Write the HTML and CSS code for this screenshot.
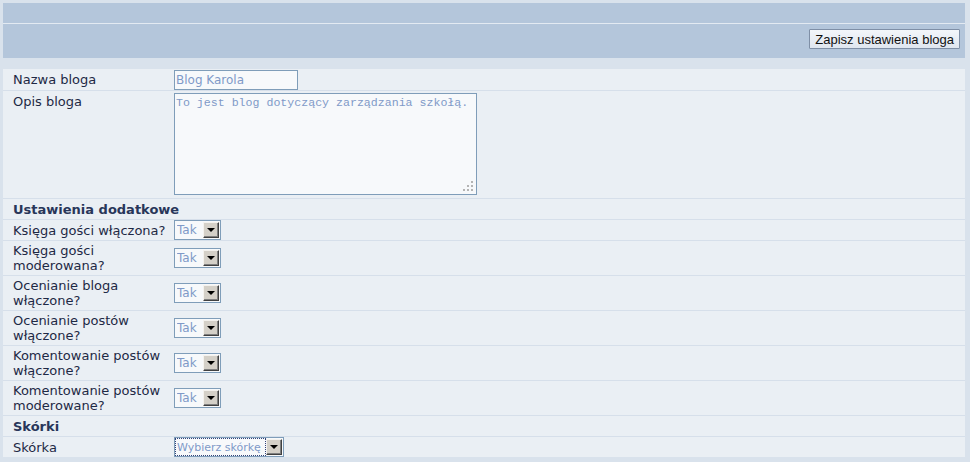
FILE: index.html
```html
<!DOCTYPE html>
<html lang="pl">
<head>
    <meta charset="UTF-8">
    <title>Ustawienia bloga</title>
    <link rel="stylesheet" href="styles.css">
</head>
<body>
    <div class="header">
        <div class="header-top"></div>
        <div class="header-bar">
            <button class="btn-save">Zapisz ustawienia bloga</button>
        </div>
    </div>

    <div class="panel">
        <table class="settings">
            <tr class="row-name">
                <td class="label">Nazwa bloga</td>
                <td><input class="text-input" type="text" value="Blog Karola"></td>
            </tr>
            <tr>
                <td class="label label-top">Opis bloga</td>
                <td><div class="area-wrap"><textarea class="area">To jest blog dotyczący zarządzania szkołą.</textarea></div></td>
            </tr>
            <tr class="section">
                <td colspan="2">Ustawienia dodatkowe</td>
            </tr>
            <tr>
                <td class="label">Księga gości włączona?</td>
                <td><span class="sel"><select><option>Tak</option></select><span class="arrow"></span></span></td>
            </tr>
            <tr>
                <td class="label">Księga gości moderowana?</td>
                <td><span class="sel"><select><option>Tak</option></select><span class="arrow"></span></span></td>
            </tr>
            <tr>
                <td class="label">Ocenianie bloga włączone?</td>
                <td><span class="sel"><select><option>Tak</option></select><span class="arrow"></span></span></td>
            </tr>
            <tr>
                <td class="label">Ocenianie postów włączone?</td>
                <td><span class="sel"><select><option>Tak</option></select><span class="arrow"></span></span></td>
            </tr>
            <tr>
                <td class="label">Komentowanie postów włączone?</td>
                <td><span class="sel"><select><option>Tak</option></select><span class="arrow"></span></span></td>
            </tr>
            <tr>
                <td class="label">Komentowanie postów moderowane?</td>
                <td><span class="sel"><select><option>Tak</option></select><span class="arrow"></span></span></td>
            </tr>
            <tr class="section">
                <td colspan="2">Skórki</td>
            </tr>
            <tr class="last">
                <td class="label">Skórka</td>
                <td><span class="sel sel-wide"><select class="focused"><option>Wybierz skórkę</option></select><span class="arrow"></span></span></td>
            </tr>
        </table>
    </div>
</body>
</html>
```

FILE: styles.css
```css
body {
    margin: 0;
    padding: 3px 5px 4px 3px;
    background-color: #d9e2ec;
    font-family: 'DejaVu Sans', Verdana, sans-serif;
    font-size: 13px;
    color: #1e2945;
}
.header {
    background-color: #b4c6db;
    height: 55px;
}
.header-top {
    height: 20px;
    border-bottom: 1px solid #e3eaf2;
}
.header-bar {
    display: flex;
    justify-content: flex-end;
    padding: 5px 5px 0 0;
}
.btn-save {
    height: 20px;
    padding: 0 5px;
    font-family: 'Liberation Sans', Arial, sans-serif;
    font-size: 13px;
    color: #111;
    background: linear-gradient(#f3f6fa, #dfe6ef);
    border: 1px solid #7f8fa6;
    border-radius: 1px;
    cursor: pointer;
}
.panel {
    margin-top: 11px;
    background-color: #eaeff4;
}
.settings {
    width: 100%;
    border-collapse: collapse;
}
.settings td {
    padding: 0;
    border-bottom: 1px solid #d6dfea;
    line-height: 15px;
    vertical-align: middle;
}
.settings td.label {
    width: 161px;
    padding: 2px 0 2px 10px;
}
.settings td.label-top {
    vertical-align: top;
    padding-top: 3px;
}
.settings tr.last td {
    border-bottom: none;
}
.section td {
    padding: 3px 10px 2px;
    font-weight: bold;
    color: #28365a;
}
.row-name td {
    padding-top: 1px;
}
.text-input {
    display: block;
    box-sizing: border-box;
    width: 124px;
    height: 20px;
    margin: 0;
    padding: 1px 1px;
    font-family: 'DejaVu Sans', Verdana, sans-serif;
    font-size: 12px;
    color: #7f99c8;
    background-color: #f7f9fb;
    border: 1px solid #7f9db9;
    outline: none;
}
.area-wrap {
    position: relative;
    width: 303px;
    margin: 2px 0 3px;
}
.area-wrap::after {
    content: '';
    position: absolute;
    right: 4px;
    bottom: 4px;
    width: 2px;
    height: 2px;
    background-color: #b4b4b4;
    box-shadow: -4px 0 #b4b4b4, -8px 0 #b4b4b4, 0 -4px #b4b4b4, -4px -4px #b4b4b4, 0 -8px #b4b4b4;
}
.area {
    display: block;
    box-sizing: border-box;
    width: 303px;
    height: 102px;
    margin: 0;
    padding: 2px 1px;
    font-family: 'Liberation Mono', 'Courier New', monospace;
    font-size: 11.6px;
    line-height: 14px;
    color: #7f99c8;
    background-color: #f7f9fb;
    border: 1px solid #7f9db9;
    outline: none;
    resize: none;
    overflow: hidden;
}
.sel {
    display: inline-flex;
    align-items: center;
    height: 20px;
    box-sizing: border-box;
    border: 1px solid #7f9db9;
    background-color: #f7f9fb;
    vertical-align: middle;
}
.sel select {
    appearance: none;
    -webkit-appearance: none;
    border: none;
    background: transparent;
    padding: 0 2px;
    margin: 0;
    height: 18px;
    width: 28px;
    font-family: 'DejaVu Sans', Verdana, sans-serif;
    font-size: 12px;
    color: #7f99c8;
    outline: none;
}
.sel-wide select {
    width: 91px;
    padding: 0 2px;
    font-size: 11px;
}
.sel select.focused {
    outline: 1px dotted #33437a;
    outline-offset: -1px;
}
.arrow {
    position: relative;
    box-sizing: border-box;
    width: 16px;
    height: 16px;
    margin-right: 1px;
    background-color: #d4d0c8;
    border-top: 1px solid #f4f2ee;
    border-left: 1px solid #f4f2ee;
    border-right: 1px solid #404040;
    border-bottom: 1px solid #404040;
    box-shadow: inset -1px -1px 0 #808080;
}
.arrow::after {
    content: '';
    position: absolute;
    left: 3px;
    top: 5px;
    border-left: 4px solid transparent;
    border-right: 4px solid transparent;
    border-top: 4px solid #000;
}
```
